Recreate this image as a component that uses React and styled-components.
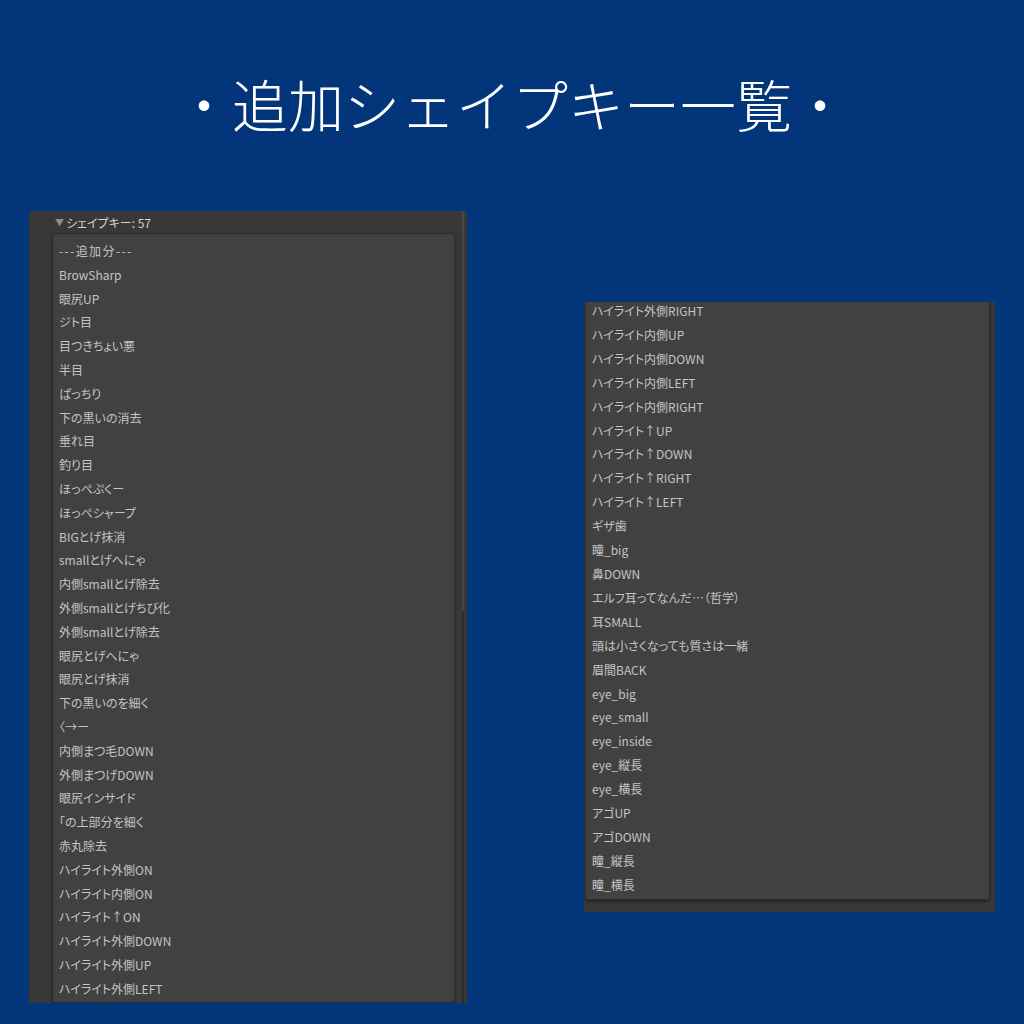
import React from "react";
import styled, { createGlobalStyle } from "styled-components";

const Global = createGlobalStyle`
  html, body { margin: 0; padding: 0; background: #03357a; }
  * { box-sizing: border-box; }
`;

const Page = styled.div`
  width: 1024px;
  height: 1024px;
  overflow: hidden;
  background: #03357a;
  display: flex;
  flex-direction: column;
`;

const Header = styled.div`
  height: 211px;
  display: flex;
  align-items: center;
  justify-content: center;
  padding-bottom: 6px;
`;

const Title = styled.h1`
  margin: 0;
  font-family: "Noto Sans CJK JP", "Noto Sans", sans-serif;
  font-weight: 300;
  font-size: 56px;
  line-height: 1;
  color: #ffffff;
`;

const Row = styled.div`
  display: flex;
  align-items: flex-start;
  padding-left: 29px;
  gap: 117px;
`;

const Panel = styled.div`
  background: #383838;
  width: ${(p) => p.$w}px;
  height: ${(p) => p.$h}px;
  margin-top: ${(p) => p.$top || 0}px;
  display: flex;
  overflow: hidden;
`;

const Main = styled.div`
  flex: 1;
  display: flex;
  flex-direction: column;
  min-width: 0;
`;

const Foldout = styled.div`
  height: 22px;
  display: flex;
  align-items: center;
  gap: 2px;
  font-family: "Noto Sans CJK JP", sans-serif;
  font-feature-settings: "palt";
  font-size: 12px;
  color: #d2d2d2;
  padding-left: 3px;
`;

const Arrow = styled.span`
  color: #8c8c8c;
  font-size: 9px;
  line-height: 1;
`;

const ListBox = styled.div`
  flex: 1;
  background: #414141;
  border: 1px solid #2c2c2c;
  border-top-width: ${(p) => (p.$cut ? 0 : 1)}px;
  border-radius: ${(p) => (p.$cut ? "0 0 3px 3px" : "3px")};
  box-shadow: 0 2px 3px rgba(0, 0, 0, 0.35);
  padding: ${(p) => p.$pad};
  overflow: hidden;
`;

const Items = styled.div`
  display: flex;
  flex-direction: column;
  margin-top: ${(p) => p.$shift || 0}px;
`;

const Item = styled.div`
  font-family: "Noto Sans CJK JP", sans-serif;
  font-feature-settings: "palt";
  font-size: 12px;
  line-height: ${(p) => p.$lh}px;
  height: ${(p) => p.$lh}px;
  color: #c4c4c4;
  white-space: nowrap;
  letter-spacing: ${(p) => (p.$spaced ? "1.4px" : "0")};
`;

const ScrollStrip = styled.div`
  width: 12px;
  display: flex;
  justify-content: flex-end;
  padding-right: 3px;
`;

const ScrollTrack = styled.div`
  width: 2px;
  height: 100%;
  background: #2d2d2d;
  display: flex;
  flex-direction: column;
`;

const ScrollThumb = styled.div`
  height: 400px;
  background: #464646;
`;

const Gutter = styled.div`
  width: ${(p) => p.$w}px;
  flex-shrink: 0;
`;

const RightMain = styled.div`
  flex: 1;
  display: flex;
  flex-direction: column;
  padding-bottom: 12px;
`;

const leftItems = [
  "---追加分---",
  "BrowSharp",
  "眼尻UP",
  "ジト目",
  "目つきちょい悪",
  "半目",
  "ぱっちり",
  "下の黒いの消去",
  "垂れ目",
  "釣り目",
  "ほっぺぷくー",
  "ほっぺシャープ",
  "BIGとげ抹消",
  "smallとげへにゃ",
  "内側smallとげ除去",
  "外側smallとげちび化",
  "外側smallとげ除去",
  "眼尻とげへにゃ",
  "眼尻とげ抹消",
  "下の黒いのを細く",
  "〈→ー",
  "内側まつ毛DOWN",
  "外側まつげDOWN",
  "眼尻インサイド",
  "「の上部分を細く",
  "赤丸除去",
  "ハイライト外側ON",
  "ハイライト内側ON",
  "ハイライト↑ON",
  "ハイライト外側DOWN",
  "ハイライト外側UP",
  "ハイライト外側LEFT",
];

const rightItems = [
  "ハイライト外側RIGHT",
  "ハイライト内側UP",
  "ハイライト内側DOWN",
  "ハイライト内側LEFT",
  "ハイライト内側RIGHT",
  "ハイライト↑UP",
  "ハイライト↑DOWN",
  "ハイライト↑RIGHT",
  "ハイライト↑LEFT",
  "ギザ歯",
  "瞳_big",
  "鼻DOWN",
  "エルフ耳ってなんだ…（哲学）",
  "耳SMALL",
  "頭は小さくなっても質さは一緒",
  "眉間BACK",
  "eye_big",
  "eye_small",
  "eye_inside",
  "eye_縦長",
  "eye_横長",
  "アゴUP",
  "アゴDOWN",
  "瞳_縦長",
  "瞳_横長",
];

export default function App() {
  return (
    <Page>
      <Global />
      <Header>
        <Title>・追加シェイプキー一覧・</Title>
      </Header>
      <Row>
        <Panel $w={438} $h={792}>
          <Gutter $w={23} />
          <Main>
            <Foldout>
              <Arrow>▼</Arrow>
              <span>シェイプキー: 57</span>
            </Foldout>
            <ListBox $pad="5px 0 0 6px">
              <Items>
                {leftItems.map((t, i) => (
                  <Item key={i} $lh={23.8} $spaced={i === 0}>
                    {t}
                  </Item>
                ))}
              </Items>
            </ListBox>
          </Main>
          <ScrollStrip>
            <ScrollTrack>
              <ScrollThumb />
            </ScrollTrack>
          </ScrollStrip>
        </Panel>
        <Panel $w={411} $h={610} $top={91}>
          <Gutter $w={1} />
          <RightMain>
            <ListBox $cut $pad="0 0 0 6px">
              <Items $shift={-3}>
                {rightItems.map((t, i) => (
                  <Item key={i} $lh={23.92}>
                    {t}
                  </Item>
                ))}
              </Items>
            </ListBox>
          </RightMain>
          <Gutter $w={5} />
        </Panel>
      </Row>
    </Page>
  );
}
